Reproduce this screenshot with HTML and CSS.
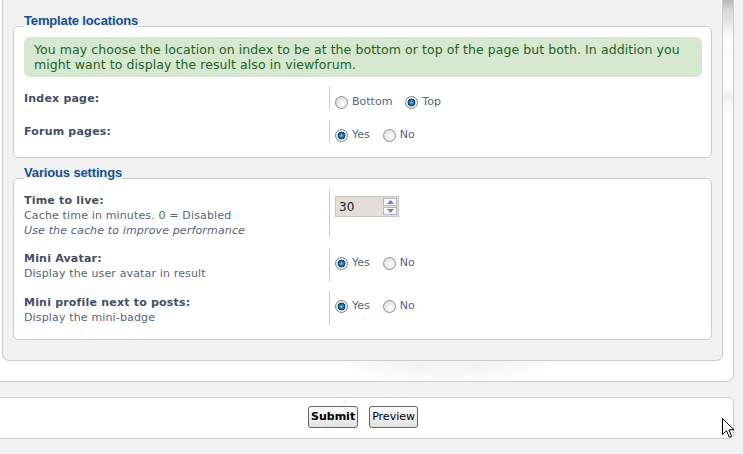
FILE: index.html
```html
<!DOCTYPE html>
<html lang="en">
<head>
<meta charset="utf-8">
<title>Template locations</title>
<link rel="stylesheet" href="styles.css">
</head>
<body>
<div class="page">
  <div class="main">
    <div class="panel">
      <fieldset class="group">
        <legend>Template locations</legend>
        <div class="notice">You may choose the location on index to be at the bottom or top of the page but both. In addition you<br>might want to display the result also in viewforum.</div>
        <dl class="row">
          <dt><label class="lbl">Index page:</label></dt>
          <dd>
            <label class="opt"><input type="radio" name="loc">Bottom</label>
            <label class="opt"><input type="radio" name="loc" checked>Top</label>
          </dd>
        </dl>
        <dl class="row">
          <dt><label class="lbl">Forum pages:</label></dt>
          <dd>
            <label class="opt"><input type="radio" name="forum" checked>Yes</label>
            <label class="opt"><input type="radio" name="forum">No</label>
          </dd>
        </dl>
      </fieldset>
      <fieldset class="group">
        <legend>Various settings</legend>
        <dl class="row">
          <dt><label class="lbl">Time to live:</label><span class="explain">Cache time in minutes. 0 = Disabled</span><em class="explain">Use the cache to improve performance</em></dt>
          <dd>
            <span class="spin">
              <input class="spin-input" type="text" value="30">
              <span class="spin-btns">
                <span class="spin-btn"><svg width="7" height="4" viewBox="0 0 7 4"><path d="M0 4 L3.5 0 L7 4 Z" fill="#6f7fbf"/></svg></span>
                <span class="spin-btn"><svg width="7" height="4" viewBox="0 0 7 4"><path d="M0 0 L7 0 L3.5 4 Z" fill="#6f7fbf"/></svg></span>
              </span>
            </span>
          </dd>
        </dl>
        <dl class="row">
          <dt><label class="lbl">Mini Avatar:</label><span class="explain">Display the user avatar in result</span></dt>
          <dd>
            <label class="opt"><input type="radio" name="avatar" checked>Yes</label>
            <label class="opt"><input type="radio" name="avatar">No</label>
          </dd>
        </dl>
        <dl class="row">
          <dt><label class="lbl">Mini profile next to posts:</label><span class="explain">Display the mini-badge</span></dt>
          <dd>
            <label class="opt"><input type="radio" name="badge" checked>Yes</label>
            <label class="opt"><input type="radio" name="badge">No</label>
          </dd>
        </dl>
      </fieldset>
    </div>
  </div>
  <div class="submit-bar">
    <button class="btn btn-primary" type="button">Submit</button>
    <button class="btn" type="button">Preview</button>
  </div>
</div>
<svg class="cursor" width="13" height="21" viewBox="0 0 13 21"><path d="M0.5 0.5 L0.5 16.5 L4.5 12.7 L7.3 19.3 L9.6 18.3 L6.9 11.8 L12 11.8 Z" fill="#fff" stroke="#000" stroke-width="1" stroke-linejoin="miter"/></svg>
</body>
</html>
```
FILE: styles.css
```css
html, body {
  margin: 0;
  padding: 0;
}
body {
  background: #f2f2f2;
  font-family: "DejaVu Sans", Verdana, sans-serif;
  font-size: 11px;
  color: #536482;
  position: relative;
  height: 454px;
  overflow: hidden;
}
.page {
  margin-left: -8px;
  width: 742px;
}
.main {
  box-sizing: border-box;
  width: 742px;
  background:
    radial-gradient(ellipse 120px 34px at 455px 352px, rgba(0,0,0,0.07) 0, rgba(0,0,0,0.03) 70%, rgba(0,0,0,0) 100%),
    linear-gradient(to bottom, #b8b8b8 0, #d6d6d6 10px, #fcfcfc 38px, #ffffff 80px, #f1f1f1 96px, #ffffff 116px) right top / 10px 130px no-repeat,
    #fff;
  border: 1px solid #cccccc;
  border-top: 0;
  border-radius: 0 0 8px 0;
  padding: 0 10px 20px 9px;
}
.panel {
  background: #f2f2f2;
  border: 1px solid #cccccc;
  border-top: 0;
  border-radius: 0 0 7px 7px;
  padding: 14px 10px 20px 10px;
}
.group {
  margin: 0;
  padding: 0 9px 14px 10px;
  background: #fff;
  border: 1px solid #cccccc;
  border-radius: 5px;
}
.group + .group {
  margin-top: 8px;
}
.group legend {
  padding: 0 0 10px 0;
  font-family: "Liberation Sans", Arial, sans-serif;
  font-weight: bold;
  font-size: 13px;
  line-height: 14px;
  color: #115098;
  letter-spacing: -0.15px;
}
.notice {
  background: #d6e8cf;
  color: #236323;
  border-radius: 6px;
  padding: 5px 10px;
  line-height: 15px;
  font-size: 12.5px;
  letter-spacing: 0.07px;
  margin-top: -1px;
}
.row {
  display: flex;
  margin: 10px 0 0 0;
}
legend + .row {
  margin-top: -1px;
}
.row dt {
  box-sizing: border-box;
  width: 305px;
  margin: 0;
  padding: 3.5px 0 0 0;
  line-height: 15px;
}
.row dd {
  flex: 1;
  margin: 0;
  border-left: 1px solid #cccccc;
  padding: 7px 0 1px 5px;
  display: flex;
  align-items: flex-start;
  line-height: 15px;
}
.lbl {
  display: block;
  font-weight: bold;
  color: #425067;
  letter-spacing: 0.2px;
}
.explain {
  display: block;
  color: #536482;
  letter-spacing: 0.15px;
}
em.explain {
  font-style: italic;
}
.opt {
  display: inline-flex;
  align-items: center;
  margin-right: 13px;
  color: #536482;
  height: 15px;
}
.opt input {
  appearance: none;
  -webkit-appearance: none;
  box-sizing: border-box;
  width: 13px;
  height: 13px;
  margin: 2px 4px 0 0;
  border-radius: 50%;
  border: 1px solid #8f8f8f;
  background: radial-gradient(circle at 60% 62%, #ffffff 0, #f0f0f0 35%, #d4d4d4 100%);
}
.opt input:checked {
  border-color: #7f7f7f;
  background: radial-gradient(circle at 50% 50%, #8fd0f4 0, #2a8bcc 1.5px, #0d5b93 2.8px, #10406a 3.6px, #e6e6e6 4.2px, #f7f7f7 5.5px);
}
.spin {
  display: inline-flex;
  box-sizing: border-box;
  width: 64px;
  height: 21px;
  border: 1px solid #c9c5bd;
  background: #e3dfd8;
  align-items: stretch;
}
.spin-input {
  flex: 1;
  min-width: 0;
  border: 0;
  background: transparent;
  font-family: "DejaVu Sans", Verdana, sans-serif;
  font-size: 12px;
  color: #1a1a1a;
  padding: 0 0 0 3px;
  margin: 0;
  outline: none;
}
.spin-btns {
  display: flex;
  flex-direction: column;
  width: 14px;
  padding: 1px 1px 1px 0;
  gap: 1px;
}
.spin-btn {
  flex: 1;
  display: flex;
  align-items: center;
  justify-content: center;
  background: #fbfbfb;
  border: 1px solid #aeb8cf;
}
.submit-bar {
  box-sizing: border-box;
  width: 742px;
  margin-top: 15px;
  background: #fff;
  border: 1px solid #cccccc;
  border-radius: 6px;
  height: 42px;
  padding-top: 8px;
  display: flex;
  justify-content: center;
  align-items: flex-start;
  gap: 11px;
}
.btn {
  box-sizing: border-box;
  height: 22px;
  padding: 0 2px;
  border: 1px solid #666666;
  border-radius: 3px;
  background: linear-gradient(to bottom, #fbfbfb 0, #efefef 50%, #e2e2e2 100%);
  font-family: "DejaVu Sans", Verdana, sans-serif;
  font-size: 11px;
  color: #000;
  line-height: 18px;
}
.btn-primary {
  font-weight: bold;
}
.cursor {
  position: absolute;
  left: 722px;
  top: 418px;
}
```
